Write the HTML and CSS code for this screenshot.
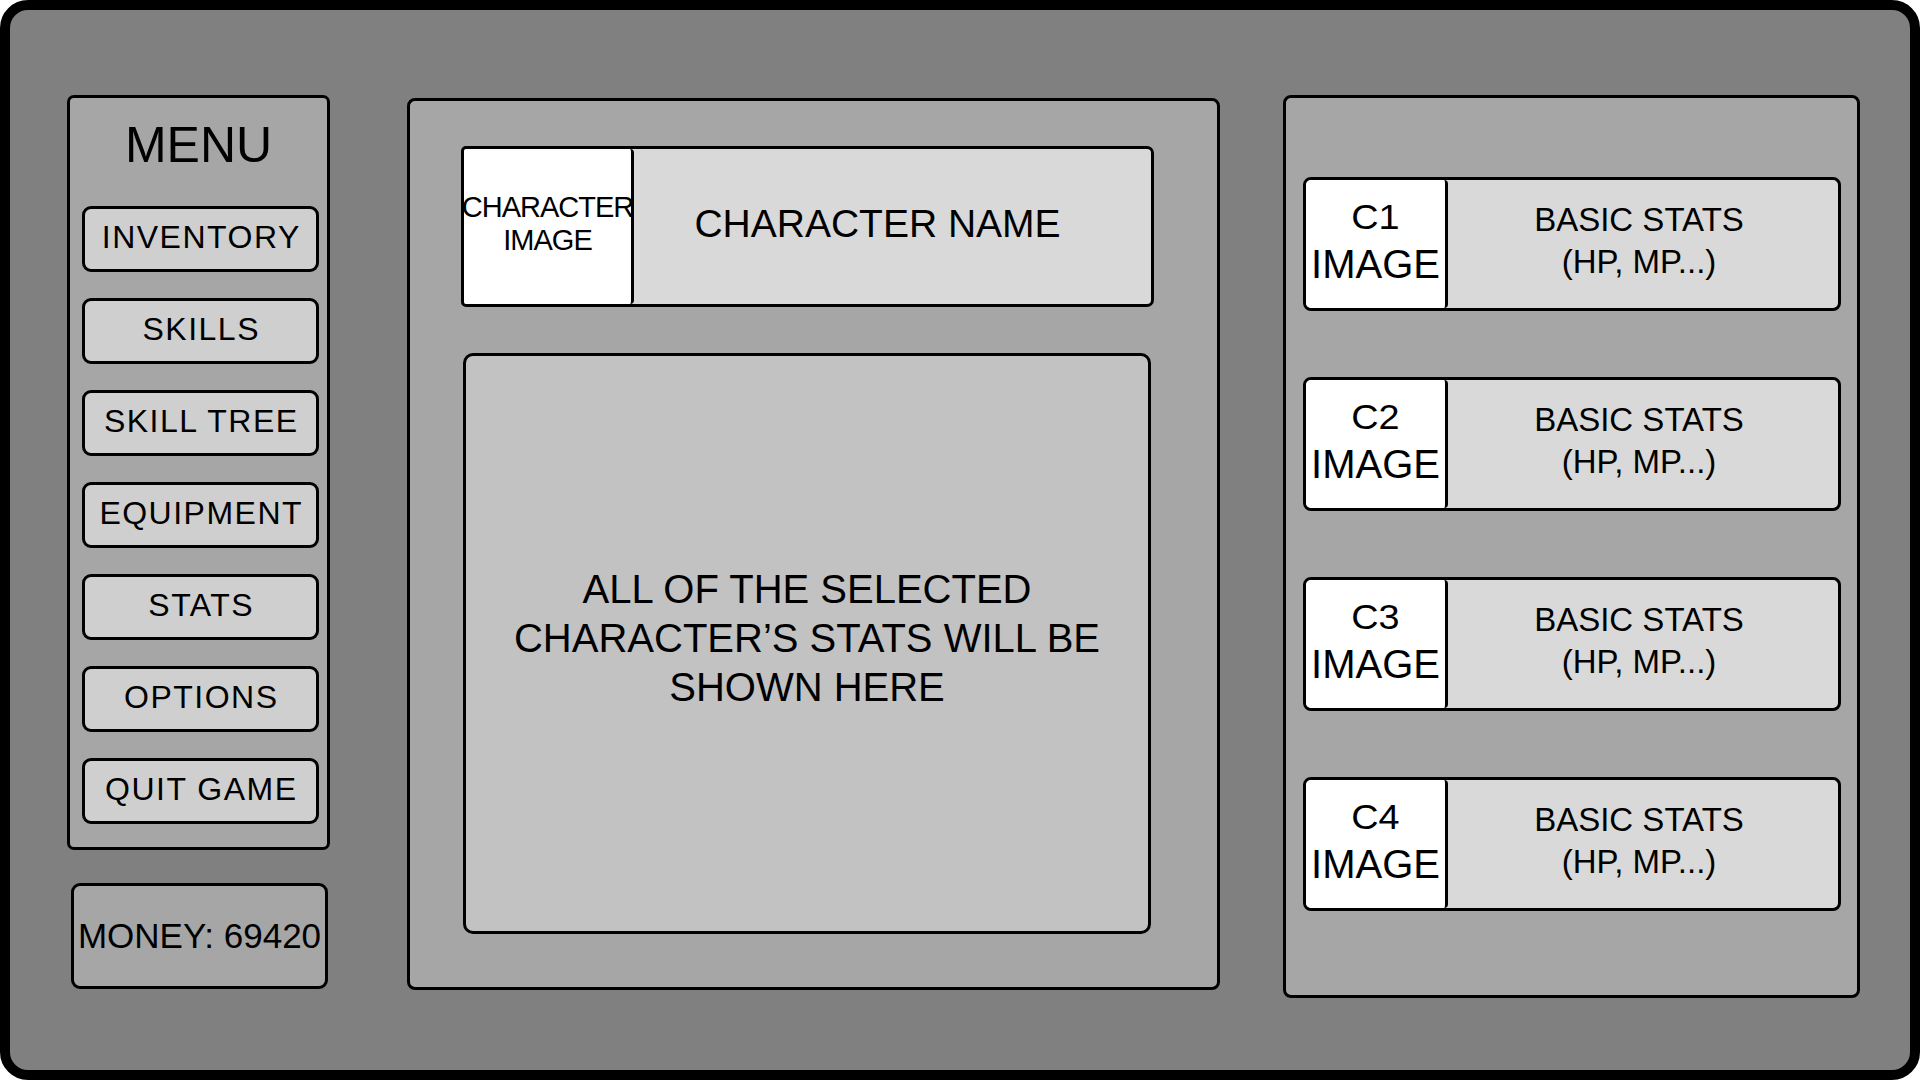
FILE: index.html
```html
<!DOCTYPE html>
<html lang="en">
<head>
    <meta charset="UTF-8">
    <meta name="viewport" content="width=device-width, initial-scale=1.0">
    <title>Game Menu</title>
    <link rel="stylesheet" href="styles.css">
</head>
<body>
    <div class="frame">
        <div class="left-col">
            <div class="menu">
                <h1 class="menu-title">MENU</h1>
                <a href="#" class="menu-btn">INVENTORY</a>
                <a href="#" class="menu-btn">SKILLS</a>
                <a href="#" class="menu-btn">SKILL TREE</a>
                <a href="#" class="menu-btn">EQUIPMENT</a>
                <a href="#" class="menu-btn">STATS</a>
                <a href="#" class="menu-btn">OPTIONS</a>
                <a href="#" class="menu-btn">QUIT GAME</a>
            </div>
            <div class="money">MONEY: 69420</div>
        </div>

        <div class="detail">
            <div class="char-header">
                <div class="char-image">CHARACTER<br>IMAGE</div>
                <div class="char-name">CHARACTER NAME</div>
            </div>
            <div class="char-stats">
                <p>ALL OF THE SELECTED<br>CHARACTER’S STATS WILL BE<br>SHOWN HERE</p>
            </div>
        </div>

        <div class="party">
            <div class="party-card">
                <div class="party-img"><span class="party-id">C1</span><span class="party-img-label">IMAGE</span></div>
                <div class="party-stats">BASIC STATS<br>(HP, MP...)</div>
            </div>
            <div class="party-card">
                <div class="party-img"><span class="party-id">C2</span><span class="party-img-label">IMAGE</span></div>
                <div class="party-stats">BASIC STATS<br>(HP, MP...)</div>
            </div>
            <div class="party-card">
                <div class="party-img"><span class="party-id">C3</span><span class="party-img-label">IMAGE</span></div>
                <div class="party-stats">BASIC STATS<br>(HP, MP...)</div>
            </div>
            <div class="party-card">
                <div class="party-img"><span class="party-id">C4</span><span class="party-img-label">IMAGE</span></div>
                <div class="party-stats">BASIC STATS<br>(HP, MP...)</div>
            </div>
        </div>
    </div>
</body>
</html>
```

FILE: styles.css
```css
body {
    margin: 0;
    background: #fff;
    font-family: 'Liberation Sans', Arial, sans-serif;
    color: #000;
}

.frame {
    width: 1920px;
    height: 1080px;
    box-sizing: border-box;
    border: 10px solid #000;
    border-radius: 28px;
    background: #808080;
    display: flex;
    align-items: flex-start;
    padding: 85px 0 0 57px;
}

/* left column */
.left-col {
    width: 263px;
    display: flex;
    flex-direction: column;
}

.menu {
    background: #a6a6a6;
    border: 3px solid #000;
    border-radius: 7px;
    padding: 22px 8px 23px 12px;
    display: flex;
    flex-direction: column;
    gap: 26px;
}

.menu-title {
    margin: 0 0 9px -4px;
    font-size: 50px;
    font-weight: normal;
    line-height: 51px;
    text-align: center;
}

.menu-btn {
    height: 66px;
    box-sizing: border-box;
    border: 3px solid #000;
    border-radius: 9px;
    background: #cfcfcf;
    color: #000;
    text-decoration: none;
    font-size: 32px;
    letter-spacing: 1.5px;
    text-indent: 1.5px;
    padding-bottom: 3px;
    display: flex;
    align-items: center;
    justify-content: center;
    white-space: nowrap;
}

.money {
    width: 257px;
    height: 106px;
    box-sizing: border-box;
    margin: 33px 0 0 4px;
    border: 3px solid #000;
    border-radius: 9px;
    background: #a6a6a6;
    font-size: 35px;
    display: flex;
    align-items: center;
    justify-content: center;
    white-space: nowrap;
}

/* selected character */
.detail {
    width: 813px;
    height: 892px;
    box-sizing: border-box;
    margin: 3px 0 0 77px;
    border: 3px solid #000;
    border-radius: 8px;
    background: #a6a6a6;
    padding: 45px 0 0 51px;
}

.char-header {
    width: 693px;
    height: 161px;
    box-sizing: border-box;
    border: 3px solid #000;
    border-radius: 5px 7px 7px 5px;
    background: #d9d9d9;
    display: flex;
}

.char-image {
    width: 170px;
    flex-shrink: 0;
    box-sizing: border-box;
    border-right: 3px solid #000;
    border-radius: 3px 4px 4px 3px;
    background: #fff;
    font-size: 29px;
    letter-spacing: -1px;
    line-height: 33px;
    text-align: center;
    white-space: nowrap;
    padding-bottom: 6px;
    display: flex;
    align-items: center;
    justify-content: center;
}

.char-name {
    flex: 1;
    font-size: 39px;
    padding: 0 30px 6px 0;
    display: flex;
    align-items: center;
    justify-content: center;
}

.char-stats {
    width: 688px;
    height: 581px;
    box-sizing: border-box;
    margin: 46px 0 0 2px;
    border: 3px solid #000;
    border-radius: 10px;
    background: #c2c2c2;
    display: flex;
    align-items: center;
    justify-content: center;
    padding-bottom: 11px;
}

.char-stats p {
    margin: 0;
    font-size: 40px;
    line-height: 49px;
    text-align: center;
}

/* party list */
.party {
    width: 577px;
    height: 903px;
    box-sizing: border-box;
    margin-left: 63px;
    border: 3px solid #000;
    border-radius: 8px;
    background: #a6a6a6;
    padding: 79px 0 0 17px;
    display: flex;
    flex-direction: column;
    gap: 66px;
}

.party-card {
    width: 538px;
    height: 134px;
    box-sizing: border-box;
    border: 3px solid #000;
    border-radius: 8px;
    background: #d9d9d9;
    display: flex;
}

.party-img {
    width: 142px;
    flex-shrink: 0;
    box-sizing: border-box;
    border-right: 3px solid #000;
    border-radius: 5px 4px 4px 5px;
    background: #fff;
    display: flex;
    flex-direction: column;
    align-items: center;
    justify-content: center;
    padding-bottom: 3px;
}

.party-id {
    font-size: 35px;
    line-height: 39px;
    transform: scaleX(1.08);
}

.party-img-label {
    margin-top: 4px;
    font-size: 40px;
    line-height: 48px;
}

.party-stats {
    flex: 1;
    font-size: 33px;
    line-height: 42px;
    text-align: center;
    display: flex;
    align-items: center;
    justify-content: center;
    padding: 0 8px 6px 0;
}
```
